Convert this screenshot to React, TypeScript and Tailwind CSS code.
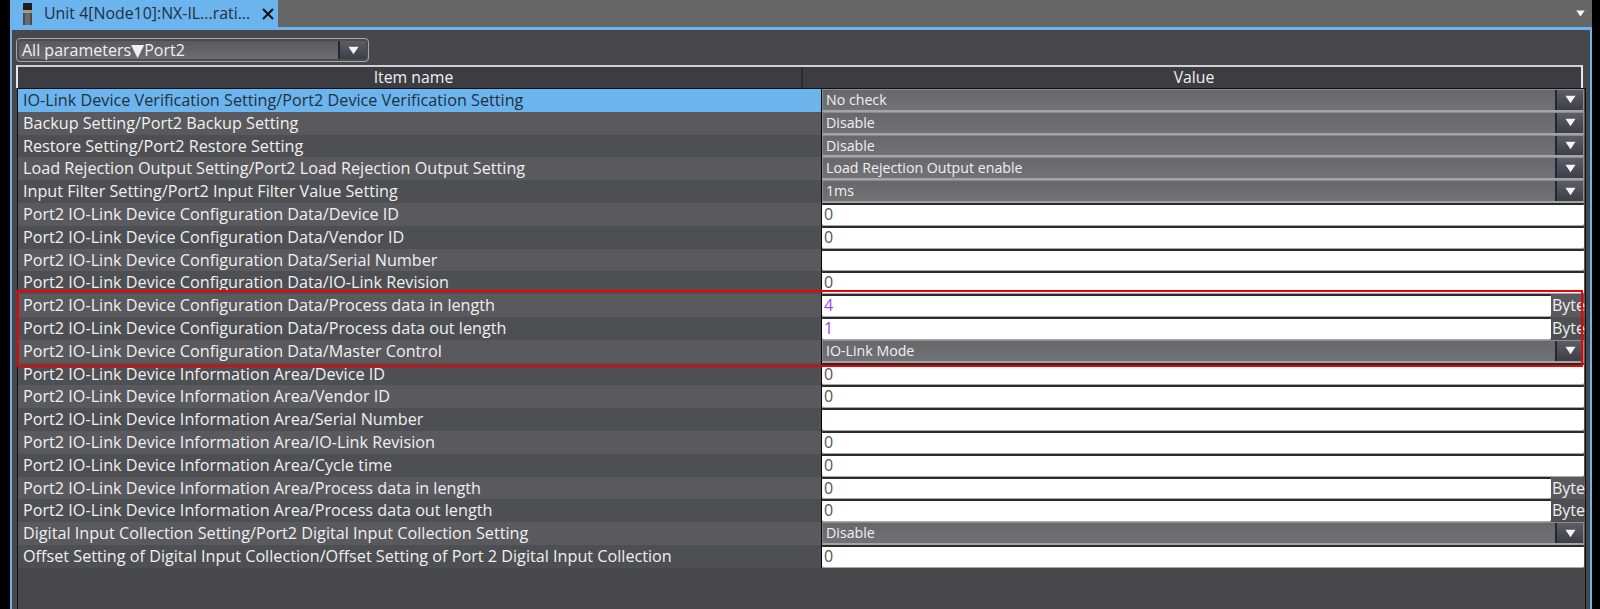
import React from 'react';

type Row = { name: string; kind: 'select' | 'input' | 'byte'; value?: string; purple?: boolean };

const rows: Row[] = [
  { name: 'IO-Link Device Verification Setting/Port2 Device Verification Setting', kind: 'select', value: 'No check' },
  { name: 'Backup Setting/Port2 Backup Setting', kind: 'select', value: 'Disable' },
  { name: 'Restore Setting/Port2 Restore Setting', kind: 'select', value: 'Disable' },
  { name: 'Load Rejection Output Setting/Port2 Load Rejection Output Setting', kind: 'select', value: 'Load Rejection Output enable' },
  { name: 'Input Filter Setting/Port2 Input Filter Value Setting', kind: 'select', value: '1ms' },
  { name: 'Port2 IO-Link Device Configuration Data/Device ID', kind: 'input', value: '0' },
  { name: 'Port2 IO-Link Device Configuration Data/Vendor ID', kind: 'input', value: '0' },
  { name: 'Port2 IO-Link Device Configuration Data/Serial Number', kind: 'input', value: '' },
  { name: 'Port2 IO-Link Device Configuration Data/IO-Link Revision', kind: 'input', value: '0' },
  { name: 'Port2 IO-Link Device Configuration Data/Process data in length', kind: 'byte', value: '4', purple: true },
  { name: 'Port2 IO-Link Device Configuration Data/Process data out length', kind: 'byte', value: '1', purple: true },
  { name: 'Port2 IO-Link Device Configuration Data/Master Control', kind: 'select', value: 'IO-Link Mode' },
  { name: 'Port2 IO-Link Device Information Area/Device ID', kind: 'input', value: '0' },
  { name: 'Port2 IO-Link Device Information Area/Vendor ID', kind: 'input', value: '0' },
  { name: 'Port2 IO-Link Device Information Area/Serial Number', kind: 'input', value: '' },
  { name: 'Port2 IO-Link Device Information Area/IO-Link Revision', kind: 'input', value: '0' },
  { name: 'Port2 IO-Link Device Information Area/Cycle time', kind: 'input', value: '0' },
  { name: 'Port2 IO-Link Device Information Area/Process data in length', kind: 'byte', value: '0' },
  { name: 'Port2 IO-Link Device Information Area/Process data out length', kind: 'byte', value: '0' },
  { name: 'Digital Input Collection Setting/Port2 Digital Input Collection Setting', kind: 'select', value: 'Disable' },
  { name: 'Offset Setting of Digital Input Collection/Offset Setting of Port 2 Digital Input Collection', kind: 'input', value: '0' },
];

function Caret({ className }: { className: string }) {
  return (
    <svg viewBox="0 0 12 9" className={className}>
      <path d="M0.5 0.5H11.5L6 8.5Z" fill="#f4f4f4" />
    </svg>
  );
}

function DropButton() {
  return (
    <div className="w-7 h-full shrink-0 flex items-center justify-center border-l-2 border-[#26262c] bg-gradient-to-b from-[#5c5d66] to-[#3d3e48]">
      <Caret className="w-[11px] h-[9px]" />
    </div>
  );
}

function Value({ row }: { row: Row }) {
  if (row.kind === 'select') {
    return (
      <div className="h-full flex items-stretch border border-[#8c8c8c] border-b-2 border-b-[#a4a4a4] bg-gradient-to-b from-[#68686c] to-[#727276]">
        <span className="flex-1 pl-[3px] text-[14.2px] leading-[19px] text-[#f0f0f0]">{row.value}</span>
        <DropButton />
      </div>
    );
  }
  const input = (
    <div
      className={`h-full flex-1 bg-white border-t-2 border-b border-t-[#2a2a2a] border-b-[#a8a8a8] pl-[2px] text-[16px] leading-[18px] rounded-[2px] ${
        row.purple ? 'text-[#a040f0]' : 'text-[#555555]'
      }`}
    >
      {row.value}
    </div>
  );
  if (row.kind === 'byte') {
    return (
      <div className="h-full flex">
        {input}
        <span className="w-[33px] shrink-0 pl-[1px] text-[16px] leading-[22px] text-[#f0f0f0] whitespace-nowrap">Byte</span>
      </div>
    );
  }
  return <div className="h-full flex">{input}</div>;
}

export default function App() {
  return (
    <div className="w-[1600px] h-[609px] bg-black overflow-hidden pl-[10px] pr-2 font-['Open_Sans','Noto_Sans',sans-serif]">
      <div className="w-[1582px] h-full flex flex-col">
        {/* Tab strip */}
        <div className="h-[27px] shrink-0 flex bg-[#666666]">
          <div className="w-[268px] flex items-center bg-[#6cb4ee] text-[#22303c]">
            <svg viewBox="0 0 9 22" className="ml-[13px] w-[9px] h-[22px]">
              <rect x="0" y="0" width="9" height="7" fill="#1e1e1e" />
              <rect x="0" y="7" width="9" height="3" fill="#9a9a9a" />
              <rect x="0" y="10" width="9" height="12" fill="#6a6a6a" />
              <rect x="0" y="10" width="2" height="12" fill="#4a4a4a" />
              <rect x="7" y="10" width="2" height="12" fill="#4a4a4a" />
            </svg>
            <span className="ml-[12px] text-[15.9px] whitespace-nowrap">Unit 4[Node10]:NX-IL...rati...</span>
            <svg viewBox="0 0 12 12" className="ml-[12px] w-[12px] h-[12px] shrink-0">
              <path d="M1 1L11 11M11 1L1 11" stroke="#111" strokeWidth="2" />
            </svg>
          </div>
          <div className="flex-1 flex items-center justify-end pr-[6px]">
            <Caret className="w-[11px] h-[7px]" />
          </div>
        </div>

        {/* Panel */}
        <div className="relative flex-1 min-h-0 flex flex-col border-t-[3px] border-x-2 border-[#6cb4ee] bg-[#48484c] pl-[4px] pr-[4px] pt-[8px]">
          <div className="w-[353px] h-[24px] shrink-0 flex items-stretch p-[2px] rounded-[4px] border border-[#a8a8a0] bg-[#4c4c50]">
            <div className="flex-1 flex bg-gradient-to-b from-[#5a5a5e] to-[#6e6e72] rounded-sm">
              <span className="flex-1 pl-[3px] text-[16px] leading-[18px] text-[#f0f0f0] whitespace-nowrap">
                All parameters<span className="font-['DejaVu_Sans'] text-[17px] leading-none">▼</span>Port2
              </span>
              <DropButton />
            </div>
          </div>

          <div className="mt-[3px] w-[1567px] h-[23px] shrink-0 flex border-t-2 border-l-2 border-r-2 border-t-[#d0d0d0] border-l-[#e8e8e8] border-r-[#e8e8e8] bg-[#3c3c42] text-[15.8px] leading-[20px] text-[#f0f0f0] text-center">
            <div className="w-[785px] pl-[8px] border-r-2 border-[#2c2c30]">Item name</div>
            <div className="flex-1 pl-[4px]">Value</div>
          </div>

          <div className="flex-1 ml-[1px] border-x border-t border-[#111114]">
            {rows.map((row, i) => (
              <div key={row.name} className={`h-[22.8px] flex ${i === 0 ? '' : i % 2 === 0 ? 'bg-[#4e4f52]' : 'bg-[#5a5a5e]'}`}>
                <div
                  className={`w-[803px] shrink-0 pl-[5px] text-[16.2px] leading-[22px] whitespace-nowrap ${
                    i === 0 ? 'bg-[#6cb4ee] text-[#22303c]' : 'text-[#f0f0f0]'
                  }`}
                >
                  {row.name}
                </div>
                <div className="flex-1 min-w-0 pr-[1px] border-l border-black">
                  <Value row={row} />
                </div>
              </div>
            ))}
          </div>

          {/* Highlight box drawn over the table */}
          <div className="absolute left-[5px] top-[260px] w-[1566px] h-[77px] border-2 border-[#f00000] pointer-events-none" />
        </div>
      </div>
    </div>
  );
}
